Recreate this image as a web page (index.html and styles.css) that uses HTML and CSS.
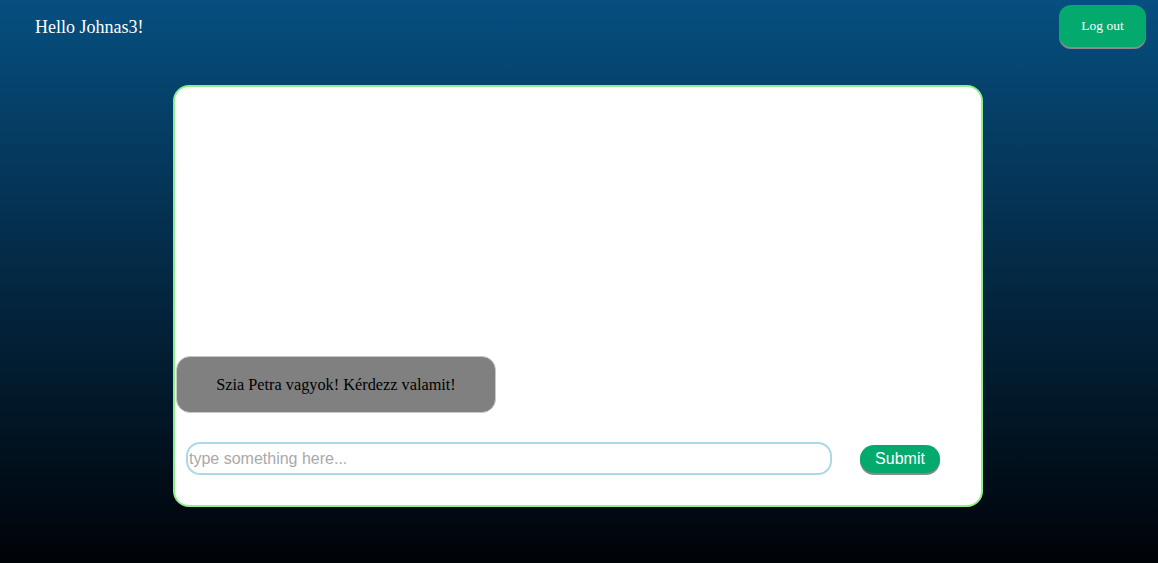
FILE: index.html
```html
<!DOCTYPE html>
<html>
<head>
<meta charset="utf-8">
<link rel="stylesheet" href="styles.css">
</head>
<body>
<header class="topbar">
  <span class="greeting">Hello Johnas3!</span>
  <button class="logout">Log out</button>
</header>
<main class="chat">
  <div class="messages">
    <div class="bubble">Szia Petra vagyok! Kérdezz valamit!</div>
  </div>
  <form class="composer">
    <input class="prompt" type="text" placeholder="type something here...">
    <button class="submit" type="button">Submit</button>
  </form>
</main>
</body>
</html>
```
FILE: styles.css
```css
html, body {
  margin: 0;
  height: 100%;
}
body {
  background: linear-gradient(to bottom, #064f80 0%, #03243c 55%, #000308 100%);
  font-family: "Liberation Serif", "Times New Roman", serif;
  overflow: hidden;
}
.topbar {
  display: flex;
  justify-content: space-between;
  align-items: flex-start;
  padding: 5px 12px 0 35px;
  height: 42px;
}
.greeting {
  color: #fff;
  font-size: 18px;
  margin-top: 12px;
}
.logout {
  width: 87px;
  height: 42px;
  border: none;
  border-radius: 12px;
  background: #04aa6d;
  color: #fff;
  font-family: "Liberation Serif", "Times New Roman", serif;
  font-size: 13.5px;
  box-shadow: 0 2px 0 #8a8a8a;
}
.chat {
  box-sizing: border-box;
  width: 810px;
  height: 422px;
  margin: 38px auto 0 173px;
  background: #fff;
  border: 2px solid #90ee90;
  border-radius: 16px;
  display: flex;
  flex-direction: column;
}
.messages {
  flex: 1;
  display: flex;
  flex-direction: column;
  justify-content: flex-end;
  align-items: flex-start;
  padding: 0 1px 29px;
}
.bubble {
  box-sizing: border-box;
  width: 320px;
  height: 57px;
  display: flex;
  align-items: center;
  justify-content: center;
  background: #808080;
  border: 1px solid #c8c8c8;
  border-radius: 14px;
  font-size: 16.3px;
  color: #000;
}
.composer {
  display: flex;
  align-items: center;
  gap: 28px;
  padding: 0 0 30px 11px;
  margin: 0;
}
.prompt {
  box-sizing: border-box;
  width: 646px;
  height: 33px;
  border: 2px solid #add8e6;
  border-radius: 14px;
  padding: 0 1px;
  font-family: "Liberation Sans", Arial, sans-serif;
  font-size: 16px;
  outline: none;
}
.prompt::placeholder {
  color: #a9a9a9;
}
.submit {
  width: 80px;
  height: 28px;
  border: none;
  border-radius: 14px;
  background: #04aa6d;
  color: #fff;
  font-family: "Liberation Sans", Arial, sans-serif;
  font-size: 16px;
  box-shadow: 0 2px 0 #8a8a8a;
  padding: 0;
}
```
